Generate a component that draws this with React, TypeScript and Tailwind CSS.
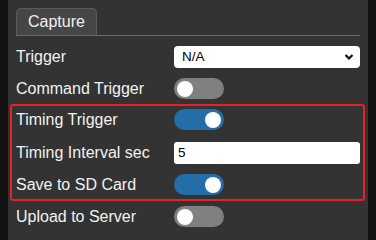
import React from "react";

function Toggle({ on }: { on: boolean }) {
  return (
    <div
      className={
        on
          ? "relative w-[50px] h-[21px] rounded-full bg-[#236ea6]"
          : "relative w-[50px] h-[21px] rounded-full bg-[#808080]"
      }
    >
      <div
        className={
          on
            ? "absolute top-[2.5px] right-[3px] w-[16px] h-[16px] rounded-full bg-white"
            : "absolute top-[2.5px] left-[3px] w-[16px] h-[16px] rounded-full bg-white"
        }
      />
    </div>
  );
}

function Row({
  label,
  children,
  className,
}: {
  label: string;
  children: React.ReactNode;
  className?: string;
}) {
  return (
    <div className={"flex items-center " + (className ?? "")}>
      <div className="w-[158px] text-[16px] leading-none text-[#f2f2f2]">{label}</div>
      <div className="flex-1 flex items-center">{children}</div>
    </div>
  );
}

export default function App() {
  return (
    <div
      className="w-[376px] h-[240px] bg-[#121212] flex px-2 overflow-hidden"
      style={{ fontFamily: '"Liberation Sans", Arial, sans-serif' }}
    >
      <div className="flex-1 bg-[#333333] px-2 pt-2 flex flex-col">
        <div className="flex border-b border-[#686868] h-[28px]">
          <div className="h-[27px] px-[11px] border border-b-0 border-[#5a5a5a] bg-[#464646] rounded-t-[5px] flex items-center text-[16px] text-[#f2f2f2] leading-none">
            Capture
          </div>
        </div>
        <Row label="Trigger" className="mt-[10px] h-[22px]">
          <div className="relative w-full h-[22px] rounded-[4px] bg-white flex items-center pl-[8px] text-[13.5px] text-black">
            N/A
            <svg
              className="absolute right-[6px] top-[7px]"
              width="10"
              height="8"
              viewBox="0 0 10 8"
            >
              <path d="M1.5 2 L5 5.5 L8.5 2" stroke="#111" strokeWidth="2.2" fill="none" />
            </svg>
          </div>
        </Row>
        <Row label="Command Trigger" className="mt-[10px] h-[21px]">
          <Toggle on={false} />
        </Row>
        <div className="-ml-[6px] -mr-[5px] mt-[5px] border-2 border-[#e5212b] rounded-[3px] pl-[4px] pr-[3px] pt-[3px] pb-[4px]">
          <Row label="Timing Trigger" className="h-[21px]">
            <Toggle on={true} />
          </Row>
          <Row label="Timing Interval sec" className="mt-[12px] h-[22px]">
            <div className="w-full h-[22px] rounded-[3px] bg-white flex items-center pl-[4px] text-[13.5px] text-black">
              5
            </div>
          </Row>
          <Row label="Save to SD Card" className="mt-[10px] h-[21px]">
            <Toggle on={true} />
          </Row>
        </div>
        <Row label="Upload to Server" className="mt-[5px] h-[21px]">
          <Toggle on={false} />
        </Row>
      </div>
    </div>
  );
}
